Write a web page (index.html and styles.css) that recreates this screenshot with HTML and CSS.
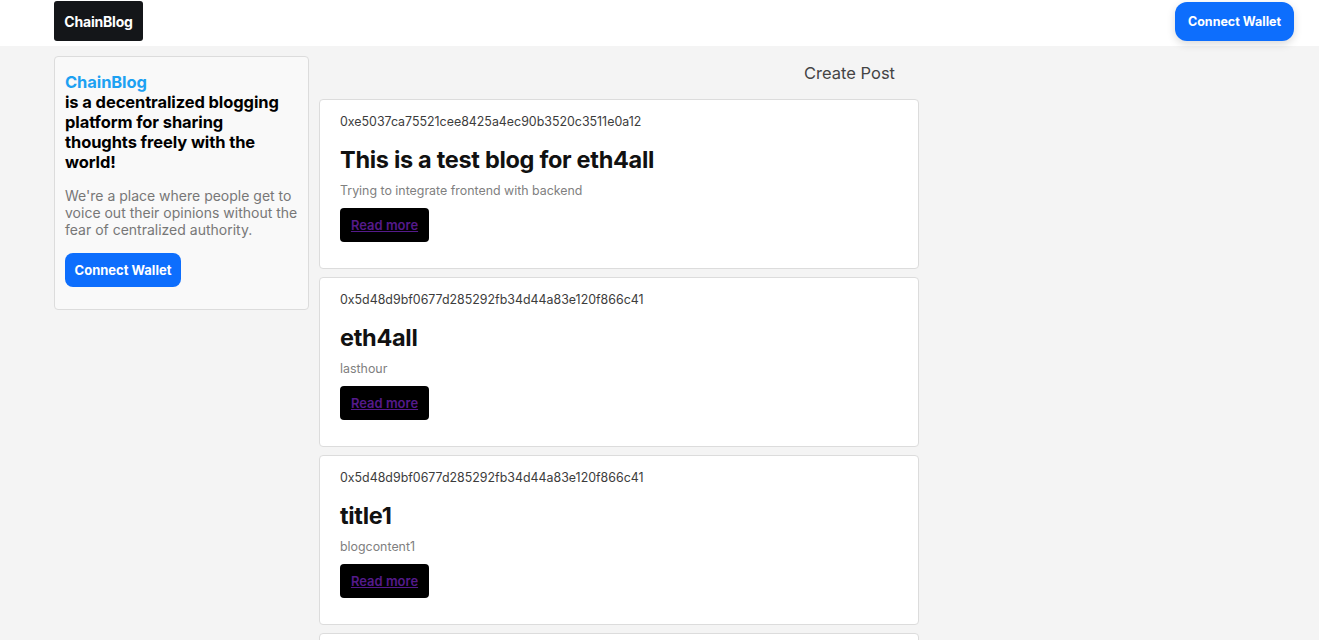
FILE: index.html
```html
<!DOCTYPE html>
<html lang="en">
<head>
<meta charset="utf-8">
<title>ChainBlog</title>
<link rel="stylesheet" href="styles.css">
</head>
<body>
<header class="topbar">
  <a class="brand" href="#">ChainBlog</a>
  <button class="btn btn-primary btn-top">Connect Wallet</button>
</header>
<div class="page">
  <aside class="about">
    <h1 class="about-title"><span class="accent">ChainBlog</span><br>is a decentralized blogging platform for sharing thoughts freely with the world!</h1>
    <p class="about-text">We're a place where people get to voice out their opinions without the fear of centralized authority.</p>
    <button class="btn btn-primary btn-side">Connect Wallet</button>
  </aside>
  <main class="feed">
    <div class="feed-head"><a class="create" href="#">Create Post</a></div>
    <article class="post">
      <div class="addr">0xe5037ca75521cee8425a4ec90b3520c3511e0a12</div>
      <h2 class="post-title">This is a test blog for eth4all</h2>
      <p class="post-body">Trying to integrate frontend with backend</p>
      <div class="read"><a href="#">Read more</a></div>
    </article>
    <article class="post">
      <div class="addr">0x5d48d9bf0677d285292fb34d44a83e120f866c41</div>
      <h2 class="post-title">eth4all</h2>
      <p class="post-body">lasthour</p>
      <div class="read"><a href="#">Read more</a></div>
    </article>
    <article class="post">
      <div class="addr">0x5d48d9bf0677d285292fb34d44a83e120f866c41</div>
      <h2 class="post-title">title1</h2>
      <p class="post-body">blogcontent1</p>
      <div class="read"><a href="#">Read more</a></div>
    </article>
    <article class="post post-empty"></article>
  </main>
</div>
</body>
</html>
```

FILE: styles.css
```css
* { box-sizing: border-box; }
html, body { margin: 0; padding: 0; }
body {
  background: #f4f4f4;
  font-family: Inter, "Noto Sans", sans-serif;
  color: #212529;
}
.topbar {
  background: #fff;
  height: 46px;
  display: flex;
  align-items: flex-start;
  justify-content: space-between;
  padding: 1px 25px 0 54px;
}
.brand {
  display: flex;
  align-items: center;
  justify-content: center;
  width: 89px;
  height: 40px;
  background: #141619;
  color: #fff;
  border-radius: 3px;
  font-size: 14px;
  font-weight: 700;
  text-decoration: none;
  letter-spacing: -0.2px;
}
.btn {
  border: none;
  font-family: inherit;
  font-weight: 700;
  color: #fff;
  cursor: pointer;
}
.btn-primary { background: #0d6efd; }
.btn-top {
  margin-top: 1px;
  width: 119px;
  height: 39px;
  border-radius: 12px;
  font-size: 12.5px;
  box-shadow: 0 3px 8px rgba(0,0,0,0.15);
}
.page {
  display: flex;
  align-items: flex-start;
  gap: 10px;
  padding: 10px 0 0 54px;
}
.about {
  width: 255px;
  background: #f9f9f9;
  border: 1px solid #dcdcdc;
  border-radius: 4px;
  padding: 15px 10px 22px 10px;
}
.about-title {
  margin: 0;
  font-size: 16.5px;
  line-height: 20px;
  font-weight: 700;
  color: #000;
  letter-spacing: -0.1px;
}
.accent { color: #1da1f2; }
.about-text {
  margin: 15px 0 15px;
  font-size: 14px;
  line-height: 17px;
  color: #777;
}
.btn-side {
  width: 116px;
  height: 34px;
  border-radius: 8px;
  font-size: 13px;
}
.feed {
  width: 600px;
  display: flex;
  flex-direction: column;
  gap: 8px;
}
.feed-head {
  display: flex;
  justify-content: flex-end;
  height: 35px;
  padding: 7px 24px 0 0;
}
.create {
  color: #444;
  font-size: 16.5px;
  text-decoration: none;
}
.post {
  background: #fff;
  border: 1px solid #dcdcdc;
  border-radius: 4px;
  height: 170px;
  flex-shrink: 0;
  padding: 15px 20px 0;
}
.addr {
  font-size: 12.4px;
  line-height: 14px;
  color: #3c3c3c;
}
.post-title {
  margin: 16px 0 0;
  font-size: 23.5px;
  line-height: 30px;
  font-weight: 700;
  color: #111;
  letter-spacing: -0.3px;
}
.post-body {
  margin: 8px 0 0;
  font-size: 12.4px;
  line-height: 15px;
  color: #808080;
}
.read {
  margin-top: 10px;
  width: 89px;
  height: 34px;
  background: #000;
  border-radius: 4px;
  display: flex;
  align-items: center;
  justify-content: center;
}
.read a {
  color: #551a8b;
  font-size: 13px;
  font-weight: 600;
}
```
